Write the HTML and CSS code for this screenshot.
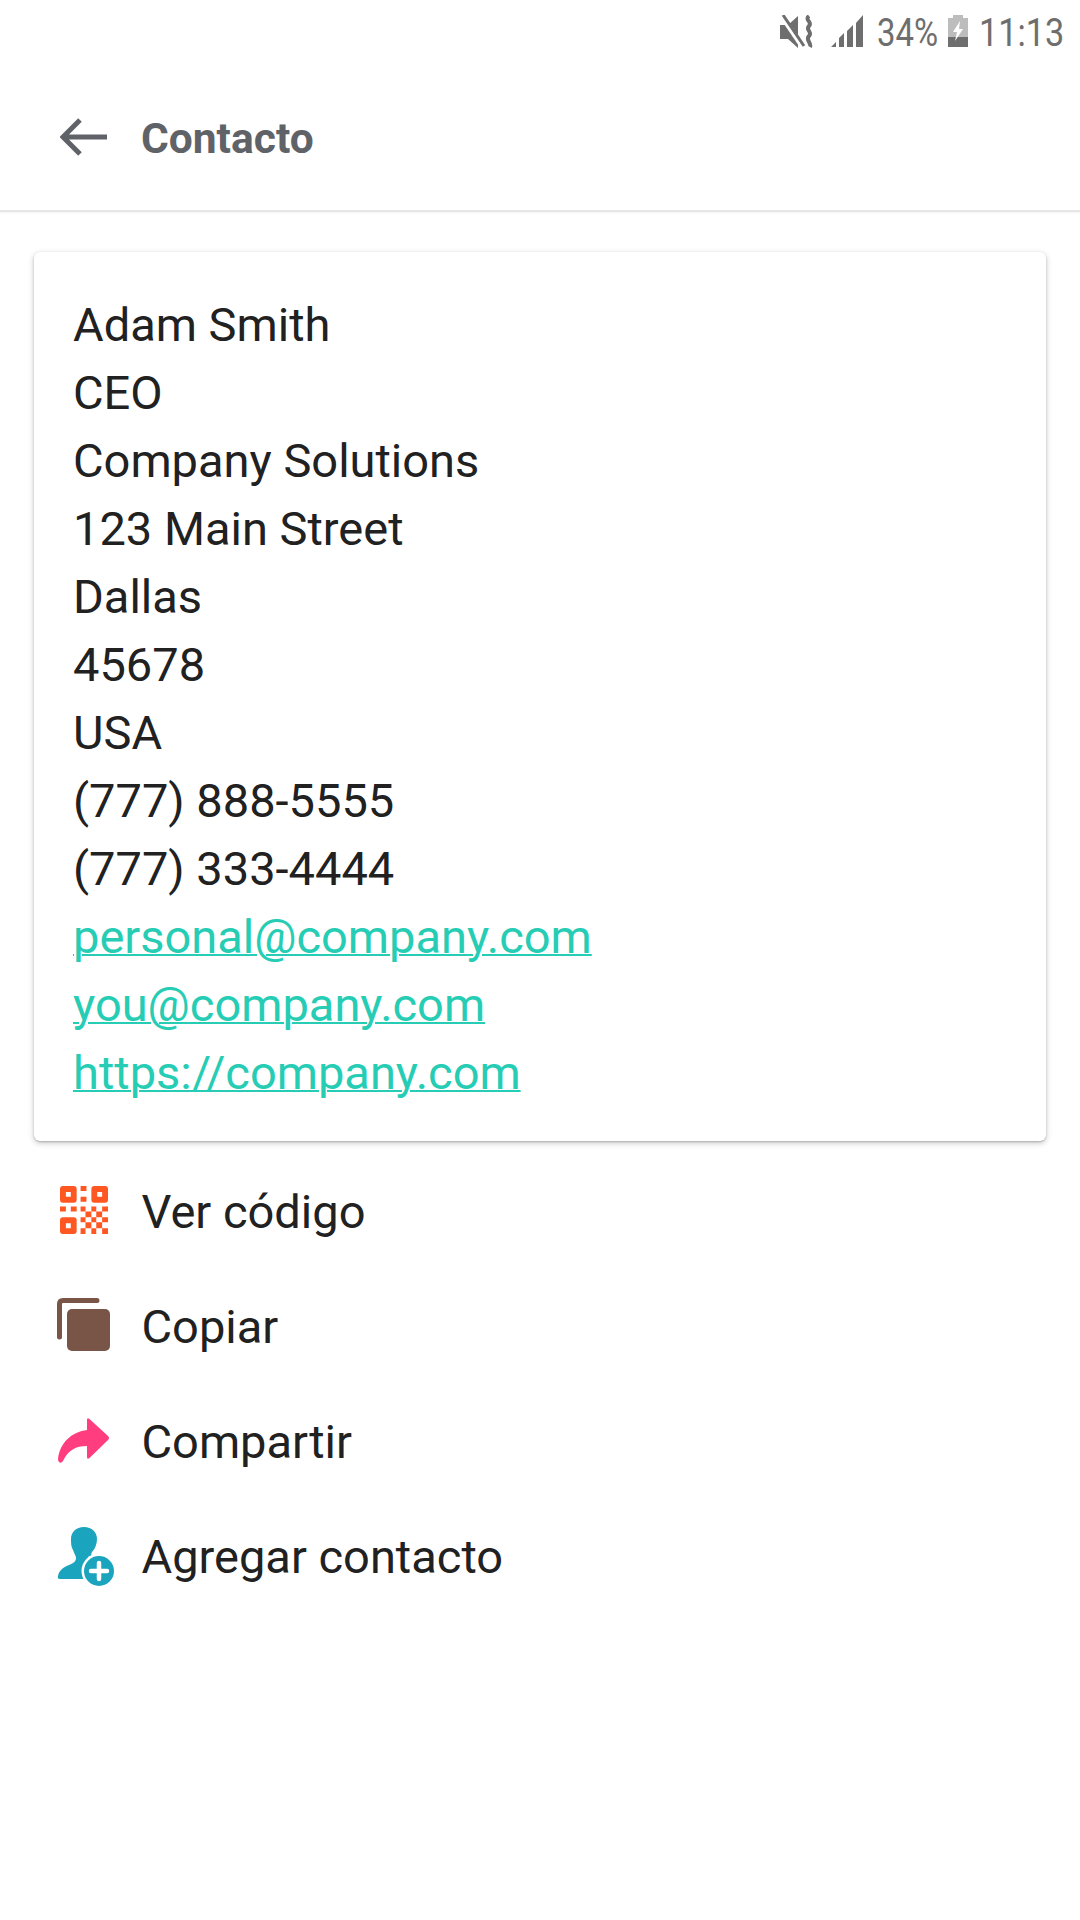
FILE: index.html
```html
<!DOCTYPE html>
<html lang="es">
<head>
<meta charset="utf-8">
<title>Contacto</title>
<link rel="stylesheet" href="styles.css">
</head>
<body>
<div class="status">
  <svg class="st-mute" width="34" height="34" viewBox="0 0 34 34"><path d="M0 10h8L18 1v32L8 24H0z" fill="#6e6e6e"/><path d="M1 0l21 31" stroke="#fff" stroke-width="5"/><path d="M3 0l21 31" stroke="#6e6e6e" stroke-width="3"/><path d="M29 1c-5 4 4 6 0 10s4 6 0 10 3 7 1 11" fill="none" stroke="#6e6e6e" stroke-width="4"/></svg>
  <svg class="st-signal" width="33" height="32" viewBox="0 0 33 32"><path d="M0 32l5-5v5zM8 32V23l5-5v14zM16 32V16l6-6v22zM25 32V8l7-8v32z" fill="#6e6e6e"/></svg>
  <span class="st-pct">34%</span>
  <svg class="st-batt" width="20" height="32" viewBox="0 0 20 32"><path d="M5 0h10v3h5v29H0V3h5z" fill="#bdbdbd"/><path d="M0 22h20v10H0z" fill="#6e6e6e"/><path d="M12 6L5 17h4l-2 9 8-12h-4z" fill="#fff"/></svg>
  <span class="st-time">11:13</span>
</div>
<header class="toolbar">
  <svg class="back" width="48" height="38" viewBox="0 0 48 38"><path d="M47 19H4M20 2L3 19l17 17" fill="none" stroke="#5f6368" stroke-width="5"/></svg>
  <h1 class="title">Contacto</h1>
</header>
<main class="card">
  <div>Adam Smith</div>
  <div>CEO</div>
  <div>Company Solutions</div>
  <div>123 Main Street</div>
  <div>Dallas</div>
  <div>45678</div>
  <div>USA</div>
  <div>(777) 888-5555</div>
  <div>(777) 333-4444</div>
  <div><a href="#">personal@company.com</a></div>
  <div><a href="#">you@company.com</a></div>
  <div><a href="#">https://company.com</a></div>
</main>
<ul class="actions">
  <li class="action">
    <span class="ic"><svg width="60" height="60" viewBox="0 0 60 60"><g fill="#ff5722" transform="translate(4 4) scale(.98) translate(-1 -6)"><path fill-rule="evenodd" d="M4 6h11q3 0 3 3v11q0 3-3 3H4q-3 0-3-3V9q0-3 3-3zm3 6v5h5v-5zM36 6h11q3 0 3 3v11q0 3-3 3H36q-3 0-3-3V9q0-3 3-3zm3 6v5h5v-5zM4 38h11q3 0 3 3v11q0 3-3 3H4q-3 0-3-3V41q0-3 3-3zm3 6v5h5v-5z"/><path d="M22 6h6v5h-6zM22 17h6v5h-6zM1 27h6v5H1zM12 27h6v5h-6zM22 27h5v5h-5zM33 27h5v5h-5zM44 27h6v5h-6zM27 32h6v6h-6zM38 32h6v6h-6zM22 38h5v5h-5zM33 38h5v5h-5zM44 38h6v5h-6zM27 43h6v6h-6zM38 43h6v6h-6zM22 49h5v6h-5zM33 49h5v6h-5zM44 49h6v6h-6z"/></g></svg></span>
    <span>Ver código</span>
  </li>
  <li class="action">
    <span class="ic"><svg width="60" height="60" viewBox="0 0 60 60"><path d="M41 3.500H7Q3.500 3.500 3.500 7V40" fill="none" stroke="#795548" stroke-width="5" stroke-linecap="round"/><rect x="11" y="12" width="43" height="42" rx="5" fill="#795548"/></svg></span>
    <span>Copiar</span>
  </li>
  <li class="action">
    <span class="ic"><svg width="60" height="60" viewBox="0 0 60 60"><path d="M31 8q0-3 2.500-1L52 24q2 2 0 4L33.500 46q-2.500 2-2.500-1V34C20 34 12 38 7 49q-2 3-4 1-1-1-1-3C4 30 16 20 31 18z" fill="#ff3d7f"/></svg></span>
    <span>Compartir</span>
  </li>
  <li class="action">
    <span class="ic"><svg width="60" height="60" viewBox="0 0 60 60"><path d="M28 0c8 0 13 5 13 12 0 5-2 10-5 13-1 2-1 3 0 5l6 6-4 16H4q-3 0-2-3C3 43 8 40 13 38c5-2 7-4 7-7 0-2-2-5-3-8-2-3-2-7-2-11C15 5 20 0 28 0z" fill="#1ba4bd"/><circle cx="43" cy="44" r="17.500" fill="#fff"/><circle cx="43" cy="44" r="15" fill="#1ba4bd"/><path d="M43 36v16M35 44h16" stroke="#fff" stroke-width="4.500" stroke-linecap="round"/></svg></span>
    <span>Agregar contacto</span>
  </li>
</ul>
</body>
</html>
```
FILE: styles.css
```css
* { box-sizing: border-box; }
html, body { margin: 0; padding: 0; background: #fff; }
body {
  width: 1080px;
  height: 1920px;
  overflow: hidden;
  font-family: Roboto, "Liberation Sans", sans-serif;
  color: #212121;
}
.status {
  height: 66px;
  display: flex;
  align-items: flex-start;
  padding-top: 15px;
  padding-left: 780px;
  color: #6e6e6e;
  font-size: 38px;
  line-height: 36px;
}
.st-mute { flex: none; }
.st-signal { flex: none; margin-left: 17px; }
.st-pct { width: 62px; margin-left: 13px; white-space: nowrap; display: inline-block; transform: scaleX(0.865); transform-origin: left center; }
.st-batt { flex: none; margin-left: 9px; }
.st-time { margin-left: 11px; white-space: nowrap; display: inline-block; transform: scaleX(0.9); transform-origin: left center; }
.toolbar {
  height: 146px;
  display: flex;
  align-items: center;
  padding-left: 60px;
  border-bottom: 2px solid #e6e6e6;
  box-shadow: 0 1px 2px rgba(0,0,0,0.05);
}
.back { flex: none; margin-bottom: 3px; }
.title {
  margin: 0 0 0 33px;
  font-size: 42.5px;
  font-weight: 700;
  color: #5f6368;
}
.card {
  margin: 40px 34px 0;
  height: 889px;
  padding: 39px 39px;
  background: #fff;
  border-radius: 6px;
  box-shadow: 0 1px 2px rgba(0,0,0,0.2), 0 2px 6px rgba(0,0,0,0.22);
  font-size: 47px;
  line-height: 68px;
}
.card a { color: #26cdb4; text-decoration: underline; text-decoration-thickness: 2px; }
.actions {
  list-style: none;
  margin: 13px 0 0;
  padding: 0 0 0 56px;
}
.action {
  height: 115px;
  display: flex;
  align-items: center;
  font-size: 47px;
}
.ic { width: 85.5px; flex: none; display: flex; }
```
